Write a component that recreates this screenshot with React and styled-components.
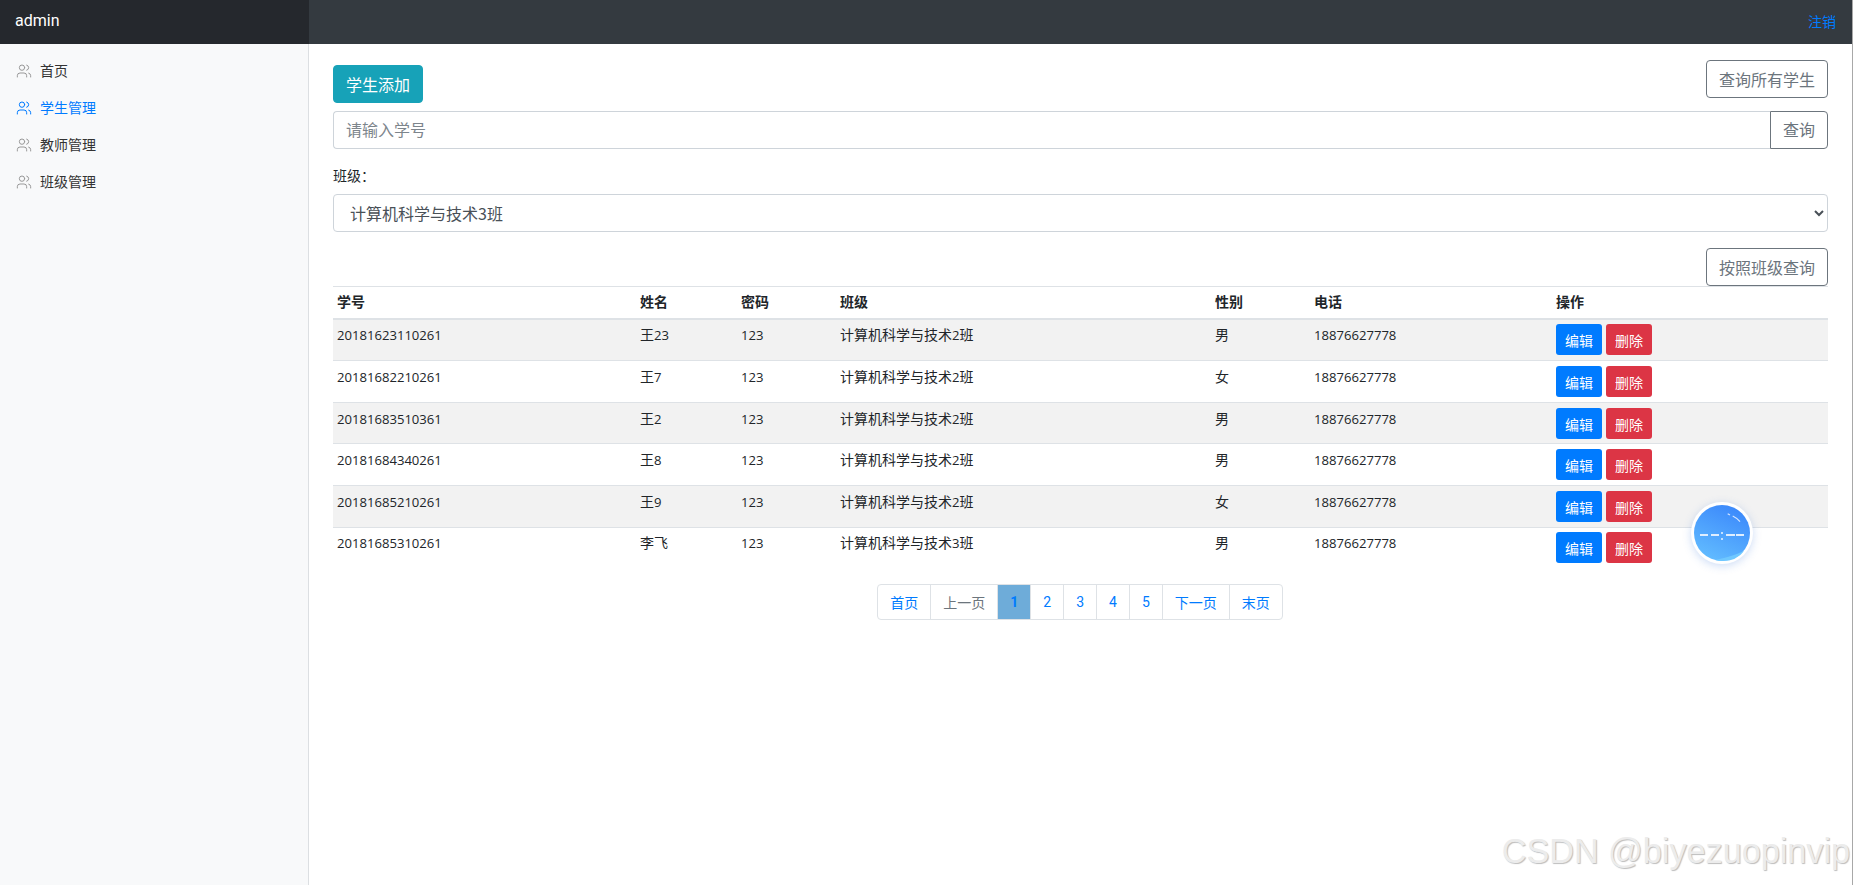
import React from "react";
import styled, { createGlobalStyle } from "styled-components";
import { Users } from "lucide-react";

const students = [
  { no: "20181623110261", name: "王23", pwd: "123", cls: "计算机科学与技术2班", sex: "男", tel: "18876627778", h: 40, pad: 4 },
  { no: "20181682210261", name: "王7", pwd: "123", cls: "计算机科学与技术2班", sex: "女", tel: "18876627778", h: 42, pad: 5 },
  { no: "20181683510361", name: "王2", pwd: "123", cls: "计算机科学与技术2班", sex: "男", tel: "18876627778", h: 41, pad: 5 },
  { no: "20181684340261", name: "王8", pwd: "123", cls: "计算机科学与技术2班", sex: "男", tel: "18876627778", h: 42, pad: 5 },
  { no: "20181685210261", name: "王9", pwd: "123", cls: "计算机科学与技术2班", sex: "女", tel: "18876627778", h: 42, pad: 5 },
  { no: "20181685310261", name: "李飞", pwd: "123", cls: "计算机科学与技术3班", sex: "男", tel: "18876627778", h: 42, pad: 4 },
];

const menu = ["首页", "学生管理", "教师管理", "班级管理"];
const columns = [
  { title: "学号", width: 303 },
  { title: "姓名", width: 101 },
  { title: "密码", width: 99 },
  { title: "班级", width: 375 },
  { title: "性别", width: 99 },
  { title: "电话", width: 242 },
  { title: "操作", width: 276 },
];

// digits sit a little smaller than the chinese text, split them out
const Mixed = ({ text }) =>
  text.split(/(\d+)/).map((part, i) => (/\d/.test(part) ? <Num key={i}>{part}</Num> : part));

const App = () => {
  return (
    <Page>
      <GlobalStyle />
      <Navbar>
        <Brand>admin</Brand>
        <SignOut href="#">注销</SignOut>
      </Navbar>
      <Body>
        <Sidebar>
          {menu.map((item) => (
            <NavItem key={item} $active={item === "学生管理"}>
              <Users size={16} strokeWidth={1.5} />
              {item}
            </NavItem>
          ))}
        </Sidebar>
        <Main>
          <TopRow>
            <AddButton>学生添加</AddButton>
            <OutlineButton>查询所有学生</OutlineButton>
          </TopRow>
          <InputGroup>
            <SearchInput placeholder="请输入学号" />
            <GroupButton>查询</GroupButton>
          </InputGroup>
          <Label>班级：</Label>
          <ClassSelect defaultValue="计算机科学与技术3班">
            <option>计算机科学与技术2班</option>
            <option>计算机科学与技术3班</option>
          </ClassSelect>
          <RightRow>
            <OutlineButton>按照班级查询</OutlineButton>
          </RightRow>
          <Table>
            <colgroup>
              {columns.map((c) => (
                <col key={c.title} width={c.width} />
              ))}
            </colgroup>
            <thead>
              <tr>
                {columns.map((c) => (
                  <Th key={c.title}>{c.title}</Th>
                ))}
              </tr>
            </thead>
            <tbody>
              {students.map((s) => (
                <Row key={s.no}>
                  <Td $h={s.h} $pad={s.pad}><Mixed text={s.no} /></Td>
                  <Td $h={s.h} $pad={s.pad}><Mixed text={s.name} /></Td>
                  <Td $h={s.h} $pad={s.pad}><Mixed text={s.pwd} /></Td>
                  <Td $h={s.h} $pad={s.pad}><Mixed text={s.cls} /></Td>
                  <Td $h={s.h} $pad={s.pad}>{s.sex}</Td>
                  <Td $h={s.h} $pad={s.pad}><Mixed text={s.tel} /></Td>
                  <Td $h={s.h} $pad={s.pad}>
                    <Actions>
                      <SmallButton $bg="#007bff">编辑</SmallButton>
                      <SmallButton $bg="#dc3545">删除</SmallButton>
                    </Actions>
                  </Td>
                </Row>
              ))}
            </tbody>
          </Table>
          <Pagination>
            <PageLink>首页</PageLink>
            <PageLink $muted>上一页</PageLink>
            <PageLink $active>1</PageLink>
            <PageLink $digit>2</PageLink>
            <PageLink $digit>3</PageLink>
            <PageLink $digit>4</PageLink>
            <PageLink $digit>5</PageLink>
            <PageLink>下一页</PageLink>
            <PageLink>末页</PageLink>
          </Pagination>
        </Main>
      </Body>
      <FloatBall>
        <svg width="62" height="62" viewBox="0 0 62 62">
          <defs>
            <linearGradient id="ball" x1="0.75" y1="0" x2="0.3" y2="1">
              <stop offset="0" stopColor="#3a87fb" />
              <stop offset="1" stopColor="#62bcff" />
            </linearGradient>
          </defs>
          <circle cx="31" cy="31" r="28" fill="url(#ball)" />
          <path d="M24 58 Q40 55 53 49 Q46 59 31 59 Q27 59 24 58Z" fill="#6fc8ff" />
          <path d="M36.7 11.7 L39 13 M41.7 14 Q46 16 49 19.7" stroke="#d5e6ff" strokeWidth="1.2" fill="none" />
          <path d="M9 33 H17 M20 33 H28 M35 33 H44 M45 33 H53" stroke="#dfeeff" strokeWidth="2" fill="none" />
          <circle cx="31" cy="31" r="1" fill="#eef6ff" />
          <circle cx="31" cy="37" r="1" fill="#eef6ff" />
        </svg>
      </FloatBall>
      <Watermark>CSDN @biyezuopinvip</Watermark>
    </Page>
  );
};

const GlobalStyle = createGlobalStyle`
  html, body {
    margin: 0;
    height: 100%;
    overflow: hidden;
    background: #fff;
  }
  body {
    font-family: "Noto Sans CJK SC", "Noto Sans", sans-serif;
    font-size: 14px;
    color: #212529;
  }
`;

const Page = styled.div`
  position: relative;
  box-sizing: content-box;
  width: 1852px;
  height: 885px;
  border-right: 1px solid #a8a8a8;
  overflow: hidden;
  display: flex;
  flex-direction: column;
`;

const Navbar = styled.header`
  flex: none;
  height: 44px;
  background: #343a40;
  display: flex;
  align-items: center;
  justify-content: space-between;
`;

const Brand = styled.div`
  box-sizing: border-box;
  width: 309px;
  height: 100%;
  padding-left: 15px;
  background: #25282d;
  color: #fff;
  font-family: Roboto, sans-serif;
  font-size: 16px;
  line-height: 41px;
`;

const SignOut = styled.a`
  margin: 0 16px 3px 0;
  color: #007bff;
  text-decoration: none;
`;

const Body = styled.div`
  flex: 1;
  display: flex;
  min-height: 0;
`;

const Sidebar = styled.aside`
  box-sizing: border-box;
  flex: none;
  width: 309px;
  padding-top: 7px;
  background: #f8f9fa;
  border-right: 1px solid #dcdfe2;
`;

const NavItem = styled.div`
  display: flex;
  align-items: center;
  gap: 8px;
  height: 37px;
  padding-left: 16px;
  font-weight: 400;
  color: ${(p) => (p.$active ? "#007bff" : "#333")};

  svg {
    color: ${(p) => (p.$active ? "#007bff" : "#999")};
    margin-top: 2px;
  }
`;

const Main = styled.main`
  flex: 1;
  min-width: 0;
  padding: 16px 24px;
`;

const TopRow = styled.div`
  display: flex;
  justify-content: space-between;
  align-items: flex-start;
  margin-bottom: 8px;
`;

const RightRow = styled.div`
  display: flex;
  justify-content: flex-end;
`;

const Btn = styled.button`
  box-sizing: border-box;
  height: 38px;
  padding: 0 12px;
  font-family: inherit;
  font-size: 16px;
  border-radius: 4px;
  cursor: pointer;
`;

const AddButton = styled(Btn)`
  margin-top: 5px;
  background: #17a2b8;
  border: 1px solid #17a2b8;
  color: #fff;
`;

const OutlineButton = styled(Btn)`
  background: #fff;
  border: 1px solid #6c757d;
  color: #6c757d;
`;

const InputGroup = styled.div`
  display: flex;
  margin-bottom: 16px;
`;

const SearchInput = styled.input`
  box-sizing: border-box;
  flex: 1;
  height: 38px;
  padding: 0 12px 2px;
  border: 1px solid #ced4da;
  border-right: none;
  border-radius: 4px 0 0 4px;
  font-family: inherit;
  font-size: 16px;
  color: #495057;
  outline: none;

  &::placeholder {
    color: #7d858c;
  }
`;

const GroupButton = styled(Btn)`
  padding-bottom: 2px;
  background: #fff;
  border: 1px solid #6c757d;
  color: #6c757d;
  border-radius: 0 4px 4px 0;
`;

const Label = styled.label`
  display: block;
  line-height: 21px;
  margin-bottom: 8px;
`;

const ClassSelect = styled.select`
  box-sizing: border-box;
  display: block;
  width: 100%;
  height: 38px;
  padding: 0 12px;
  margin-bottom: 16px;
  background: #fff;
  border: 1px solid #ced4da;
  border-radius: 4px;
  font-family: inherit;
  font-size: 16px;
  color: #495057;
`;

const Table = styled.table`
  width: 100%;
  table-layout: fixed;
  border-collapse: separate;
  border-spacing: 0;
`;

const Th = styled.th`
  box-sizing: border-box;
  height: 34px;
  padding: 3px 4px 5px;
  text-align: left;
  font-weight: 700;
  line-height: 21px;
  border-top: 1px solid #dee2e6;
  border-bottom: 2px solid #dee2e6;
`;

const Row = styled.tr`
  &:nth-of-type(odd) {
    background: #f2f2f2;
  }
  &:first-child td {
    border-top: none;
  }
`;

const Td = styled.td`
  box-sizing: border-box;
  height: ${(p) => p.$h}px;
  padding: ${(p) => p.$pad}px 4px 0;
  vertical-align: top;
  line-height: 20px;
  border-top: 1px solid #dee2e6;
`;

const Num = styled.span`
  font-family: "Open Sans", sans-serif;
  font-size: 13.1px;
`;

const Actions = styled.div`
  display: flex;
  gap: 4px;
`;

const SmallButton = styled.button`
  box-sizing: border-box;
  width: 46px;
  height: 31px;
  padding: 0;
  border: none;
  border-radius: 3px;
  background: ${(p) => p.$bg};
  color: #fff;
  font-family: inherit;
  font-size: 14px;
`;

const Pagination = styled.nav`
  display: flex;
  justify-content: center;
  margin-top: 15px;
`;

const PageLink = styled.a`
  box-sizing: border-box;
  height: 36px;
  padding: 0 12px;
  margin-left: -1px;
  line-height: 34px;
  border: 1px solid #dee2e6;
  background: ${(p) => (p.$active ? "#6eacd9" : "#fff")};
  color: ${(p) => (p.$muted ? "#6c757d" : "#007bff")};
  font-weight: ${(p) => (p.$active ? 700 : 400)};
  font-family: ${(p) => (p.$active || p.$digit ? "Roboto, sans-serif" : "inherit")};

  &:first-child {
    border-radius: 4px 0 0 4px;
  }
  &:last-child {
    border-radius: 0 4px 4px 0;
  }
`;

const FloatBall = styled.div`
  position: absolute;
  left: 1691px;
  top: 502px;
  width: 62px;
  height: 62px;
  border-radius: 50%;
  background: #fff;
  box-shadow: 0 2px 8px rgba(60, 120, 220, 0.25);
  svg {
    display: block;
  }
`;

const Watermark = styled.div`
  position: absolute;
  right: 2px;
  bottom: 14px;
  font-family: "Liberation Sans", sans-serif;
  font-size: 34.2px;
  line-height: 40px;
  color: #ececec;
  text-shadow: 1px 1px 1px #bdbdbd;
  white-space: nowrap;
`;

export default App;
